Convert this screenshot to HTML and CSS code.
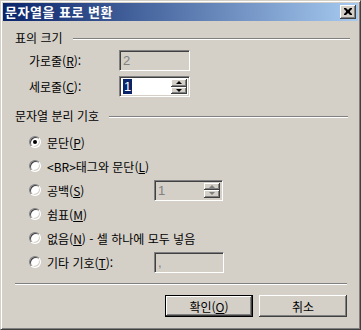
FILE: index.html
```html
<!DOCTYPE html>
<html lang="ko">
<head>
    <meta charset="UTF-8">
    <title>문자열을 표로 변환</title>
    <link rel="stylesheet" href="styles.css">
</head>
<body>
    <div class="window">
        <div class="titlebar">
            <span class="title">문자열을 표로 변환</span>
            <button class="close">
                <svg width="8" height="7" viewBox="0 0 8 7">
                    <path d="M0 0h2l2 2 2-2h2v1l-2 2v1l2 2v1h-2l-2-2-2 2h-2v-1l2-2v-1l-2-2z" fill="#000"/>
                </svg>
            </button>
        </div>

        <div class="content">
            <div class="group-head first">
                <span>표의 크기</span>
                <i class="etch"></i>
            </div>
            <div class="field-row">
                <span class="field-label">가로줄(<u>R</u>):</span>
                <div class="field disabled size"><span class="value">2</span></div>
            </div>
            <div class="field-row second">
                <span class="field-label">세로줄(<u>C</u>):</span>
                <div class="field size">
                    <span class="value"><span class="sel">1</span></span>
                    <div class="spinner">
                        <span class="arrow up"></span>
                        <span class="arrow down"></span>
                    </div>
                </div>
            </div>

            <div class="group-head sep-head">
                <span>문자열 분리 기호</span>
                <i class="etch"></i>
            </div>
            <div class="radio-row">
                <span class="radio checked"></span>
                <span class="radio-label">문단(<u>P</u>)</span>
            </div>
            <div class="radio-row">
                <span class="radio"></span>
                <span class="radio-label">&lt;BR&gt;태그와 문단(<u>L</u>)</span>
            </div>
            <div class="radio-row">
                <span class="radio"></span>
                <span class="radio-label fixed">공백(<u>S</u>)</span>
                <div class="field disabled blank">
                    <span class="value">1</span>
                    <div class="spinner">
                        <span class="arrow up"></span>
                        <span class="arrow down"></span>
                    </div>
                </div>
            </div>
            <div class="radio-row">
                <span class="radio"></span>
                <span class="radio-label">쉼표(<u>M</u>)</span>
            </div>
            <div class="radio-row">
                <span class="radio"></span>
                <span class="radio-label">없음(<u>N</u>) - 셀 하나에 모두 넣음</span>
            </div>
            <div class="radio-row">
                <span class="radio"></span>
                <span class="radio-label fixed">기타 기호(<u>T</u>):</span>
                <div class="field disabled other"><span class="value">,</span></div>
            </div>

            <div class="separator"></div>

            <div class="buttons">
                <button class="btn default">확인(<u>O</u>)</button>
                <button class="btn">취소</button>
            </div>
        </div>
    </div>
</body>
</html>
```

FILE: styles.css
```css
* {
    box-sizing: border-box;
}
html, body {
    margin: 0;
    padding: 0;
    background: #d4d0c8;
}
body {
    font-family: "Noto Sans CJK KR", "Liberation Sans", sans-serif;
    font-size: 12px;
    color: #000;
}
u {
    text-decoration: underline;
    text-underline-offset: 1px;
}
.window {
    width: 361px;
    height: 330px;
    padding: 2px;
    background: #d4d0c8;
    border: 1px solid;
    border-color: #d4d0c8 #404040 #404040 #d4d0c8;
    box-shadow: inset 1px 1px #fff, inset -1px -1px #808080;
    display: flex;
    flex-direction: column;
}
.titlebar {
    height: 18px;
    display: flex;
    align-items: center;
    justify-content: space-between;
    padding: 0 2px 0 2px;
    background: linear-gradient(to right, #0a246a, #a6caf0);
}
.title {
    color: #fff;
    font-weight: bold;
    font-size: 13px;
    line-height: 18px;
    letter-spacing: 0.5px;
}
.close {
    width: 16px;
    height: 14px;
    padding: 0;
    margin: 0;
    border: 0;
    background: #d4d0c8;
    display: flex;
    align-items: center;
    justify-content: center;
    box-shadow: inset -1px -1px #404040, inset 1px 1px #fff, inset -2px -2px #808080, inset 2px 2px #d4d0c8;
}
.close svg {
    display: block;
    margin: 0 1px 1px 0;
}
.content {
    flex: 1;
    padding: 10px 8px 0 12px;
    display: flex;
    flex-direction: column;
}
.group-head {
    height: 14px;
    display: flex;
    align-items: center;
    gap: 10px;
    line-height: 14px;
}
.group-head span {
    white-space: nowrap;
}
.etch {
    flex: 1;
    height: 2px;
    border-top: 1px solid #808080;
    border-bottom: 1px solid #fff;
    margin-top: 1px;
}
.sep-head {
    margin-top: 12px;
    margin-right: 2px;
}
.field-row {
    display: flex;
    align-items: center;
    height: 21px;
    margin-top: 5px;
    padding-left: 14px;
}
.field-label {
    width: 90px;
}
.field {
    height: 21px;
    background: #fff;
    border: 1px solid;
    border-color: #808080 #fff #fff #808080;
    box-shadow: inset 1px 1px #404040, inset -1px -1px #d4d0c8;
    display: flex;
    align-items: stretch;
    padding: 2px;
}
.field.disabled {
    background: #d4d0c8;
    color: #808080;
}
.field .value {
    flex: 1;
    display: flex;
    align-items: center;
    padding-left: 1px;
    font-family: "Liberation Sans", sans-serif;
    font-size: 13px;
}
.sel {
    background: #0a246a;
    color: #fff;
    padding: 0 1px;
    line-height: 15px;
}
.size {
    width: 71px;
}
.blank {
    width: 69px;
}
.other {
    width: 70px;
}
.spinner {
    width: 16px;
    display: flex;
    flex-direction: column;
}
.arrow {
    flex: 1;
    background: #d4d0c8;
    box-shadow: inset -1px -1px #404040, inset 1px 1px #fff, inset -2px -2px #808080;
    display: flex;
    align-items: center;
    justify-content: center;
}
.arrow::after {
    content: "";
    width: 0;
    height: 0;
    border-left: 3px solid transparent;
    border-right: 3px solid transparent;
    margin-right: 1px;
}
.arrow.up::after {
    border-bottom: 3px solid #000;
}
.arrow.down::after {
    border-top: 3px solid #000;
}
.disabled .arrow.up::after {
    border-bottom-color: #808080;
}
.disabled .arrow.down::after {
    border-top-color: #808080;
}
.sep-head + .radio-row {
    margin-top: 7px;
}
.radio-row {
    height: 24px;
    display: flex;
    align-items: center;
    padding-left: 14px;
}
.radio {
    width: 12px;
    height: 12px;
    border-radius: 50%;
    background: #fff;
    border: 1px solid;
    border-color: #808080 #fff #fff #808080;
    box-shadow: inset 1px 1px #404040, inset -1px -1px #d4d0c8;
    display: flex;
    align-items: center;
    justify-content: center;
    margin-right: 6px;
}
.radio.checked::after {
    content: "";
    width: 4px;
    height: 4px;
    border-radius: 50%;
    background: #000;
}
.radio-label.fixed {
    width: 107px;
}
.separator {
    height: 2px;
    border-top: 1px solid #808080;
    border-bottom: 1px solid #fff;
    margin-top: 9px;
    margin-right: 3px;
}
.buttons {
    display: flex;
    justify-content: flex-end;
    gap: 6px;
    margin-top: 10px;
    margin-right: 3px;
}
.btn {
    width: 88px;
    height: 22px;
    padding: 0;
    border: 0;
    background: #d4d0c8;
    font-family: inherit;
    font-size: 12px;
    color: #000;
    box-shadow: inset -1px -1px #404040, inset 1px 1px #fff, inset -2px -2px #808080, inset 2px 2px #d4d0c8;
}
.btn.default {
    border: 1px solid #000;
    box-shadow: inset -1px -1px #404040, inset 1px 1px #fff, inset -2px -2px #808080;
}
```
